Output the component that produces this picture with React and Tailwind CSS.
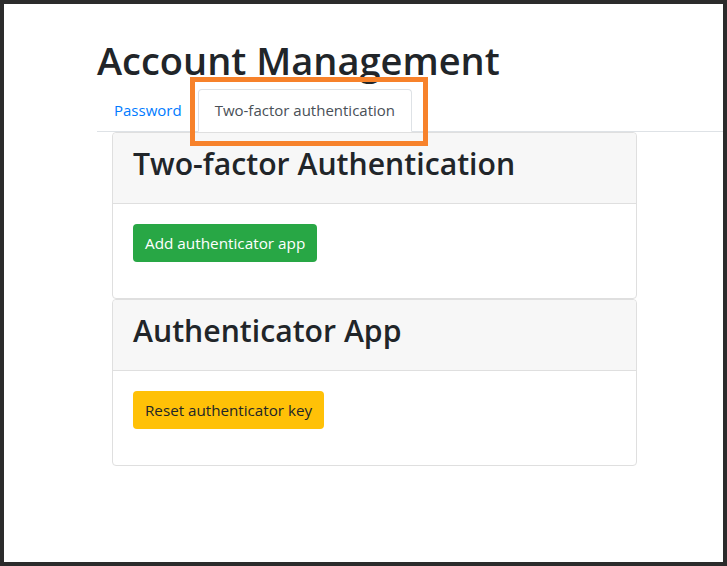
import React from "react";

export default function App() {
  const font = { fontFamily: '"Open Sans", "Noto Sans", sans-serif' };
  return (
    <div
      className="relative w-[727px] h-[566px] border-4 border-[#2b2b2b] bg-white text-[#212529]"
      style={font}
    >
      <div className="pl-[93px] pt-[30px]">
        <h1 className="text-[38px] leading-[52px] mb-[3px] font-semibold">Account Management</h1>
        <div className="flex border-b border-[#dee2e6]">
          <a className="block pl-4 pr-[15px] py-2 border border-transparent text-[15px] leading-6 text-[#007bff]">
            Password
          </a>
          <a className="block px-4 py-2 border border-[#dee2e6] border-b-white rounded-t -mb-px bg-white text-[15px] leading-6 text-[#495057]">
            Two-factor authentication
          </a>
        </div>
        <div className="ml-[15px] w-[525px]">
          <div className="border border-[#dfdfdf] rounded">
            <div className="px-5 py-3 bg-[#f7f7f7] border-b border-[#dfdfdf] rounded-t">
              <h2 className="text-[30.2px] leading-[38px] mb-2 font-semibold">Two-factor Authentication</h2>
            </div>
            <div className="p-5">
              <button className="block px-3 py-[7px] rounded bg-[#28a745] text-white text-[15.3px] leading-6">
                Add authenticator app
              </button>
              <div className="h-4" />
            </div>
          </div>
          <div className="border border-[#dfdfdf] rounded">
            <div className="px-5 py-3 bg-[#f7f7f7] border-b border-[#dfdfdf] rounded-t">
              <h2 className="text-[30.2px] leading-[38px] mb-2 font-semibold">Authenticator App</h2>
            </div>
            <div className="p-5">
              <button className="block px-3 py-[7px] rounded bg-[#ffc107] text-[#212529] text-[15.2px] leading-6">
                Reset authenticator key
              </button>
              <div className="h-4" />
            </div>
          </div>
        </div>
      </div>
      <div className="absolute left-[186px] top-[73px] w-[238px] h-[69px] border-[5px] border-[#f7822b]" />
    </div>
  );
}
